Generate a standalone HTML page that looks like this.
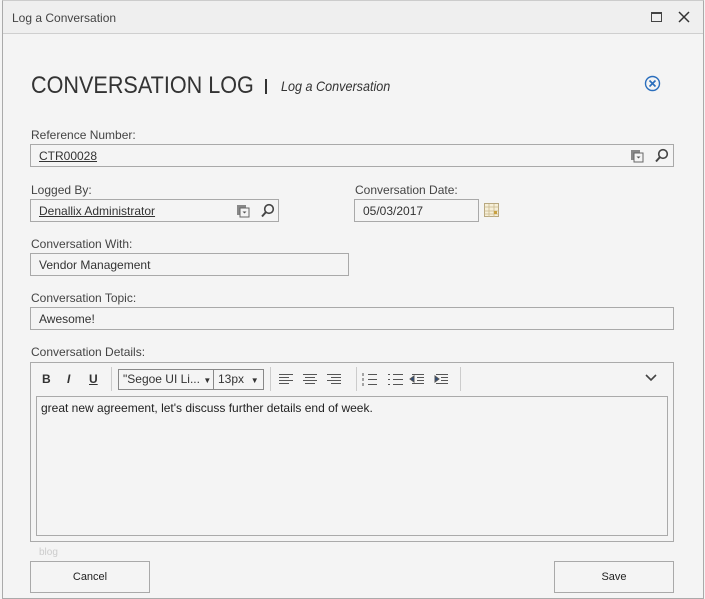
<!DOCTYPE html>
<html><head><style>
*{box-sizing:border-box;margin:0;padding:0}
body{width:705px;height:599px;background:#f4f4f4;font-family:"Liberation Sans",sans-serif;color:#333;position:relative;overflow:hidden;font-size:12px}
.abs{position:absolute}
.frame{left:2px;top:0;width:702px;height:599px;border:1px solid #aaa;border-top:1px solid #ccc}
.tb{left:3px;top:1px;width:700px;height:33px;background:#efefef;border-bottom:1px solid #cfcfcf}
.lbl{font-size:12px;color:#444}
.box{border:1px solid #a9a9a9;background:#f4f4f4;font-size:12px;color:#333;padding:4px 0 0 8px;height:23px}
.u{text-decoration:underline}
.btn{border:1px solid #a9a9a9;background:#f4f4f4;font-size:11px;text-align:center;line-height:30px;height:32px;width:120px;color:#222}
</style></head><body>
<div class="abs frame"></div>
<div class="abs tb"></div>
<div class="abs" style="left:12px;top:11px;font-size:12px;color:#444">Log a Conversation</div>
<div class="abs" style="left:651px;top:12px;width:11px;height:10px;border:1px solid #444;border-top:2px solid #444"></div>
<svg class="abs" style="left:678px;top:11px" width="12" height="12"><path d="M1 1L11 11M11 1L1 11" stroke="#333" stroke-width="1.5"/></svg>

<div class="abs" style="left:31px;top:72px;font-size:24px;color:#333;transform:scaleX(0.9);transform-origin:0 0;white-space:nowrap">CONVERSATION LOG</div>
<div class="abs" style="left:265px;top:79px;width:2px;height:15px;background:#333"></div>
<div class="abs" style="left:281px;top:78px;font-size:14px;font-style:italic;color:#333;transform:scaleX(0.9);transform-origin:0 0;white-space:nowrap">Log a Conversation</div>
<svg class="abs" style="left:644px;top:75px" width="17" height="17"><circle cx="8.5" cy="8.5" r="7" fill="none" stroke="#2a6ebd" stroke-width="1.4"/><path d="M5.5 5.5L11.5 11.5M11.5 5.5L5.5 11.5" stroke="#2a6ebd" stroke-width="1.6"/></svg>

<div class="abs lbl" style="left:31px;top:128px">Reference Number:</div>
<div class="abs box" style="left:30px;top:144px;width:644px"><span class="u">CTR00028</span></div>
<div class="abs lbl" style="left:31px;top:183px">Logged By:</div>
<div class="abs box" style="left:30px;top:199px;width:249px"><span class="u">Denallix Administrator</span></div>
<div class="abs lbl" style="left:355px;top:183px">Conversation Date:</div>
<div class="abs box" style="left:354px;top:199px;width:125px">05/03/2017</div>
<div class="abs lbl" style="left:31px;top:237px">Conversation With:</div>
<div class="abs box" style="left:30px;top:253px;width:319px">Vendor Management</div>
<div class="abs lbl" style="left:31px;top:291px">Conversation Topic:</div>
<div class="abs box" style="left:30px;top:307px;width:644px">Awesome!</div>
<div class="abs lbl" style="left:31px;top:345px">Conversation Details:</div>

<svg class="abs" style="left:630px;top:148px" width="44" height="16"><rect x="1" y="2" width="9" height="10" fill="#888"/><rect x="4" y="5" width="9" height="9" fill="#f4f4f4" stroke="#666"/><path d="M6.5 8.5h4l-2 2z" fill="#555"/><circle cx="33" cy="6" r="4.3" fill="none" stroke="#444" stroke-width="1.6"/><path d="M30 9l-4 4.5" stroke="#444" stroke-width="2"/></svg>
<svg class="abs" style="left:236px;top:203px" width="44" height="16"><rect x="1" y="2" width="9" height="10" fill="#888"/><rect x="4" y="5" width="9" height="9" fill="#f4f4f4" stroke="#666"/><path d="M6.5 8.5h4l-2 2z" fill="#555"/><circle cx="33" cy="6" r="4.3" fill="none" stroke="#444" stroke-width="1.6"/><path d="M30 9l-4 4.5" stroke="#444" stroke-width="2"/></svg>
<svg class="abs" style="left:484px;top:203px" width="16" height="15"><rect x="0.5" y="0.5" width="14" height="13" fill="#f6efd8" stroke="#b8a880"/><path d="M0.5 4h14M5 1v13M10 1v13M0.5 8h14M0.5 11h14" stroke="#c9b98f" stroke-width="0.8"/><rect x="10" y="8" width="3" height="3" fill="#c8a040"/></svg>

<div class="abs" style="left:30px;top:362px;width:644px;height:180px;border:1px solid #aaa"></div>
<div class="abs" style="left:42px;top:372px;font-weight:bold;font-size:12px">B</div>
<div class="abs" style="left:67px;top:372px;font-style:italic;font-weight:bold;font-size:12px">I</div>
<div class="abs" style="left:89px;top:372px;text-decoration:underline;font-weight:bold;font-size:12px">U</div>
<div class="abs" style="left:111px;top:367px;width:1px;height:24px;background:#ccc"></div>
<div class="abs" style="left:118px;top:369px;width:96px;height:21px;border:1px solid #888;font-size:12px;padding:2px 0 0 4px">"Segoe UI Li... <span style="font-size:8px">▼</span></div>
<div class="abs" style="left:213px;top:369px;width:51px;height:21px;border:1px solid #888;font-size:12px;padding:2px 0 0 4px">13px &nbsp;<span style="font-size:8px">▼</span></div>
<div class="abs" style="left:270px;top:367px;width:1px;height:24px;background:#ccc"></div>
<svg class="abs" style="left:279px;top:372px" width="180" height="14" stroke="#555" stroke-width="1">
<path d="M0 2.5h14M0 5.5h10M0 8.5h14M0 11.5h10"/>
<path d="M24 2.5h14M26 5.5h10M24 8.5h14M26 11.5h10"/>
<path d="M48 2.5h14M52 5.5h10M48 8.5h14M52 11.5h10"/>
<path d="M89 2.5h9M89 7.5h9M89 12.5h9M84 1v3M84 6v3M84 11v3"/>
<path d="M114 2.5h10M114 7.5h10M114 12.5h10M109 2.5h2M109 7.5h2M109 12.5h2"/>
<path d="M133 2.5h12M138 5.5h7M138 8.5h7M133 11.5h12M131 7l4-3v6z" fill="#2a4a7a"/>
<path d="M157 2.5h12M162 5.5h7M162 8.5h7M157 11.5h12M160 7l-4-3v6z" fill="#2a4a7a"/>
</svg>
<div class="abs" style="left:356px;top:367px;width:1px;height:24px;background:#ccc"></div>
<div class="abs" style="left:460px;top:367px;width:1px;height:24px;background:#ccc"></div>
<svg class="abs" style="left:645px;top:374px" width="12" height="8"><path d="M1 1l5 5 5-5" fill="none" stroke="#444" stroke-width="1.6"/></svg>
<div class="abs" style="left:36px;top:396px;width:632px;height:140px;border:1px solid #aaa;padding:4px 0 0 4px;font-size:12px;color:#222">great new agreement, let's discuss further details end of week.</div>

<div class="abs" style="left:39px;top:547px;font-size:10px;color:#ccc">blog</div>
<div class="abs btn" style="left:30px;top:561px">Cancel</div>
<div class="abs btn" style="left:554px;top:561px">Save</div>
</body></html>
